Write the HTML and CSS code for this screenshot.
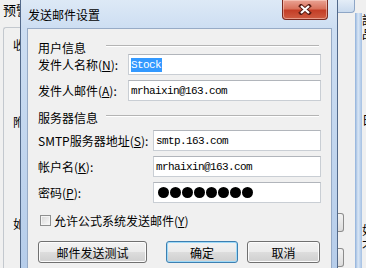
FILE: index.html
```html
<!DOCTYPE html>
<html>
<head>
	<meta http-equiv="Content-Type" content="text/html; charset=utf-8" />
	<title>发送邮件设置</title>
	<link rel="stylesheet" href="styles.css">
</head>

<body>
	<div class="escritorio">

		<!-- ventana de fondo, lado izquierdo -->
		<div class="padre_izq">
			<div class="padre_titulo">预警</div>
			<div class="padre_grupo">
				<div class="frag f_shou">收</div>
				<div class="frag f_fu">附</div>
				<div class="frag f_ru">如</div>
			</div>
		</div>

		<!-- dialogo -->
		<div class="dialogo">
			<div class="barra_titulo">
				<span class="titulo">发送邮件设置</span>
				<div class="btn_cerrar">
					<svg width="14" height="11" viewBox="0 0 14 11">
						<path d="M3 2 L11 9 M11 2 L3 9" stroke="#5a1d14" stroke-width="4" stroke-linecap="square" fill="none"/>
						<path d="M3 2 L11 9 M11 2 L3 9" stroke="#ffffff" stroke-width="2.2" fill="none"/>
					</svg>
				</div>
			</div>

			<div class="panel">
				<div class="grupo_cab"><span>用户信息</span></div>
				<div class="fila">
					<label>发件人名称(<u>N</u>):</label>
					<div class="caja"><span class="seleccion">Stock</span></div>
				</div>
				<div class="fila">
					<label>发件人邮件(<u>A</u>):</label>
					<div class="caja">mrhaixin@163.com</div>
				</div>

				<div class="grupo_cab grupo_2"><span>服务器信息</span></div>
				<div class="fila ancha">
					<label>SMTP服务器地址(<u>S</u>):</label>
					<div class="caja">smtp.163.com</div>
				</div>
				<div class="fila ancha">
					<label>帐户名(<u>K</u>):</label>
					<div class="caja">mrhaixin@163.com</div>
				</div>
				<div class="fila ancha">
					<label>密码(<u>P</u>):</label>
					<div class="caja">
						<span class="punto"></span><span class="punto"></span><span class="punto"></span><span class="punto"></span><span class="punto"></span><span class="punto"></span><span class="punto"></span><span class="punto"></span>
					</div>
				</div>

				<div class="fila_check">
					<span class="check"></span>
					<span>允许公式系统发送邮件(<u>Y</u>)</span>
				</div>

				<div class="fila_botones">
					<div class="boton prueba">邮件发送测试</div>
					<div class="boton aceptar">确定</div>
					<div class="boton cancelar">取消</div>
				</div>
			</div>
		</div>

		<!-- ventana de fondo, lado derecho -->
		<div class="padre_der">
			<div class="padre_der_a">
				<div class="boton_max"></div>
				<div class="padre_boton b1"></div>
				<div class="padre_boton b2"></div>
			</div>
			<div class="padre_marco"></div>
			<div class="padre_der_b">
				<div class="frag_d d1">話</div>
				<div class="frag_d d2">品</div>
				<div class="frag_d d3">日</div>
				<div class="frag_d d4">如</div>
				<div class="frag_d d5">不</div>
			</div>
		</div>

	</div>
</body>
</html>
```

FILE: styles.css
```css
* {
	box-sizing: border-box;
}

body {
	margin: 0;
	width: 366px;
	height: 268px;
	overflow: hidden;
	font-family: "Noto Sans CJK SC", "Liberation Sans", sans-serif;
	font-size: 12px;
	color: #000000;
	background-color: #f0f0f0;
}

.escritorio {
	display: flex;
	height: 268px;
}

/* ventana de fondo */

.padre_izq {
	width: 20px;
	flex: none;
	overflow: hidden;
	white-space: nowrap;
	background-color: #f0f0f0;
}

.padre_titulo {
	height: 27px;
	padding: 2px 0 0 3px;
	font-size: 13px;
	line-height: 16px;
}

.padre_grupo {
	height: 241px;
	margin-left: 3px;
	padding-left: 9px;
	border: 1px solid #c3c8ce;
	border-right: none;
	border-bottom: none;
	border-radius: 3px 0 0 0;
}

.frag {
	line-height: 14px;
	height: 14px;
}

.f_shou { margin-top: 10px; }
.f_fu { margin-top: 63px; }
.f_ru { margin-top: 88px; }

.padre_der {
	width: 28px;
	flex: none;
	display: flex;
	background-color: #f0f0f0;
}

.padre_der_a {
	width: 17px;
	flex: none;
	position: relative;
}

.boton_max {
	height: 13px;
	background: linear-gradient(#e4edf7, #c9daee);
	border: 1px solid #8ea6c6;
	border-top: none;
	border-left: none;
	border-radius: 0 0 4px 0;
}

.padre_boton {
	position: absolute;
	left: 0;
	width: 6px;
	height: 19px;
	border: 1px solid #8c8c8c;
	border-left: none;
	border-radius: 0 3px 3px 0;
	background: linear-gradient(#f3f3f3, #dcdcdc);
}

.b1 { top: 213px; }
.b2 { top: 248px; }

.padre_marco {
	width: 7px;
	flex: none;
	margin-top: 13px;
	background: linear-gradient(90deg, #8fb0da, #d9e6f5 45%, #a4c0e3);
}

.padre_der_b {
	width: 4px;
	flex: none;
	overflow: hidden;
	white-space: nowrap;
}

.frag_d {
	height: 14px;
	line-height: 14px;
}

.d1 { margin-top: 13px; }
.d2 { margin-top: 0; }
.d3 { margin-top: 72px; }
.d4 { margin-top: 96px; }
.d5 { margin-top: 2px; }

/* dialogo */

.dialogo {
	width: 318px;
	flex: none;
	display: flex;
	flex-direction: column;
	padding: 0 5px 0 6px;
	border-left: 1px solid #52698a;
	border-right: 1px solid #52698a;
	background: linear-gradient(180deg, #dde9f6 0, #cddef2 28px, #b6cdea 100%);
}

.barra_titulo {
	height: 28px;
	flex: none;
	display: flex;
	justify-content: space-between;
	align-items: flex-start;
}

.titulo {
	padding: 7px 0 0 1px;
	line-height: 16px;
}

.btn_cerrar {
	width: 46px;
	height: 20px;
	margin-right: 4px;
	display: flex;
	align-items: center;
	justify-content: center;
	border: 1px solid #7a2a20;
	border-top: none;
	border-radius: 0 0 4px 4px;
	background: linear-gradient(#eaa394 0, #d9735d 45%, #c43e27 55%, #cf5c42 100%);
	box-shadow: inset 0 0 0 1px rgba(255, 220, 210, 0.5);
}

.panel {
	flex: 1;
	padding: 12px 10px 0 10px;
	background-color: #f0f0f0;
	border: 1px solid #97abc6;
	border-bottom: none;
}

.grupo_cab {
	display: flex;
	align-items: center;
	height: 13px;
	line-height: 13px;
}

.grupo_cab span {
	width: 68px;
	flex: none;
}

.grupo_cab::after {
	content: "";
	flex: 1;
	margin: -3px 2px 0 0;
	border-top: 1px solid #b4b4b4;
	border-bottom: 1px solid #ffffff;
}

.grupo_2 {
	height: 14px;
	margin-top: 9px;
}

.fila {
	display: flex;
	align-items: center;
	height: 21px;
	margin-top: 5px;
}

.grupo_cab + .fila {
	margin-top: 0;
}

.grupo_2 + .fila {
	margin-top: 6px;
}

.fila label {
	width: 90px;
	flex: none;
	white-space: nowrap;
}

.fila.ancha label {
	width: 115px;
}

.caja {
	flex: 1;
	height: 21px;
	display: flex;
	align-items: center;
	padding-left: 2px;
	background-color: #ffffff;
	border: 1px solid #c9ced4;
	border-top-color: #b1b5bb;
	font-family: "Liberation Mono", monospace;
	font-size: 11px;
	letter-spacing: -0.6px;
	white-space: nowrap;
}

.seleccion {
	background-color: #3399ff;
	color: #ffffff;
	line-height: 14px;
	padding-right: 1px;
}

.punto {
	width: 11px;
	height: 11px;
	margin-right: 1px;
	border-radius: 50%;
	background-color: #000000;
}

.punto:first-child {
	margin-left: 2px;
}

.fila_check {
	display: flex;
	align-items: center;
	height: 14px;
	margin-top: 10px;
	padding-left: 2px;
}

.check {
	width: 11px;
	height: 11px;
	margin-right: 3px;
	border: 1px solid #8e8f8f;
	background: linear-gradient(135deg, #d6d6d6, #fbfbfb);
	box-shadow: inset 0 0 0 1px #f4f4f4;
}

.fila_botones {
	display: flex;
	height: 22px;
	margin-top: 14px;
}

.boton {
	height: 22px;
	display: flex;
	align-items: center;
	justify-content: center;
	border: 1px solid #707070;
	border-radius: 3px;
	background: linear-gradient(#f2f2f2 0, #ebebeb 50%, #dddddd 50%, #cfcfcf 100%);
	box-shadow: inset 0 0 0 1px #fcfcfc;
}

.prueba {
	width: 109px;
}

.aceptar {
	width: 72px;
	margin-left: 19px;
	border-color: #3c7fb1;
	box-shadow: inset 0 0 0 1px #9fdaf8;
}

.cancelar {
	width: 73px;
	margin-left: 9px;
}
```
